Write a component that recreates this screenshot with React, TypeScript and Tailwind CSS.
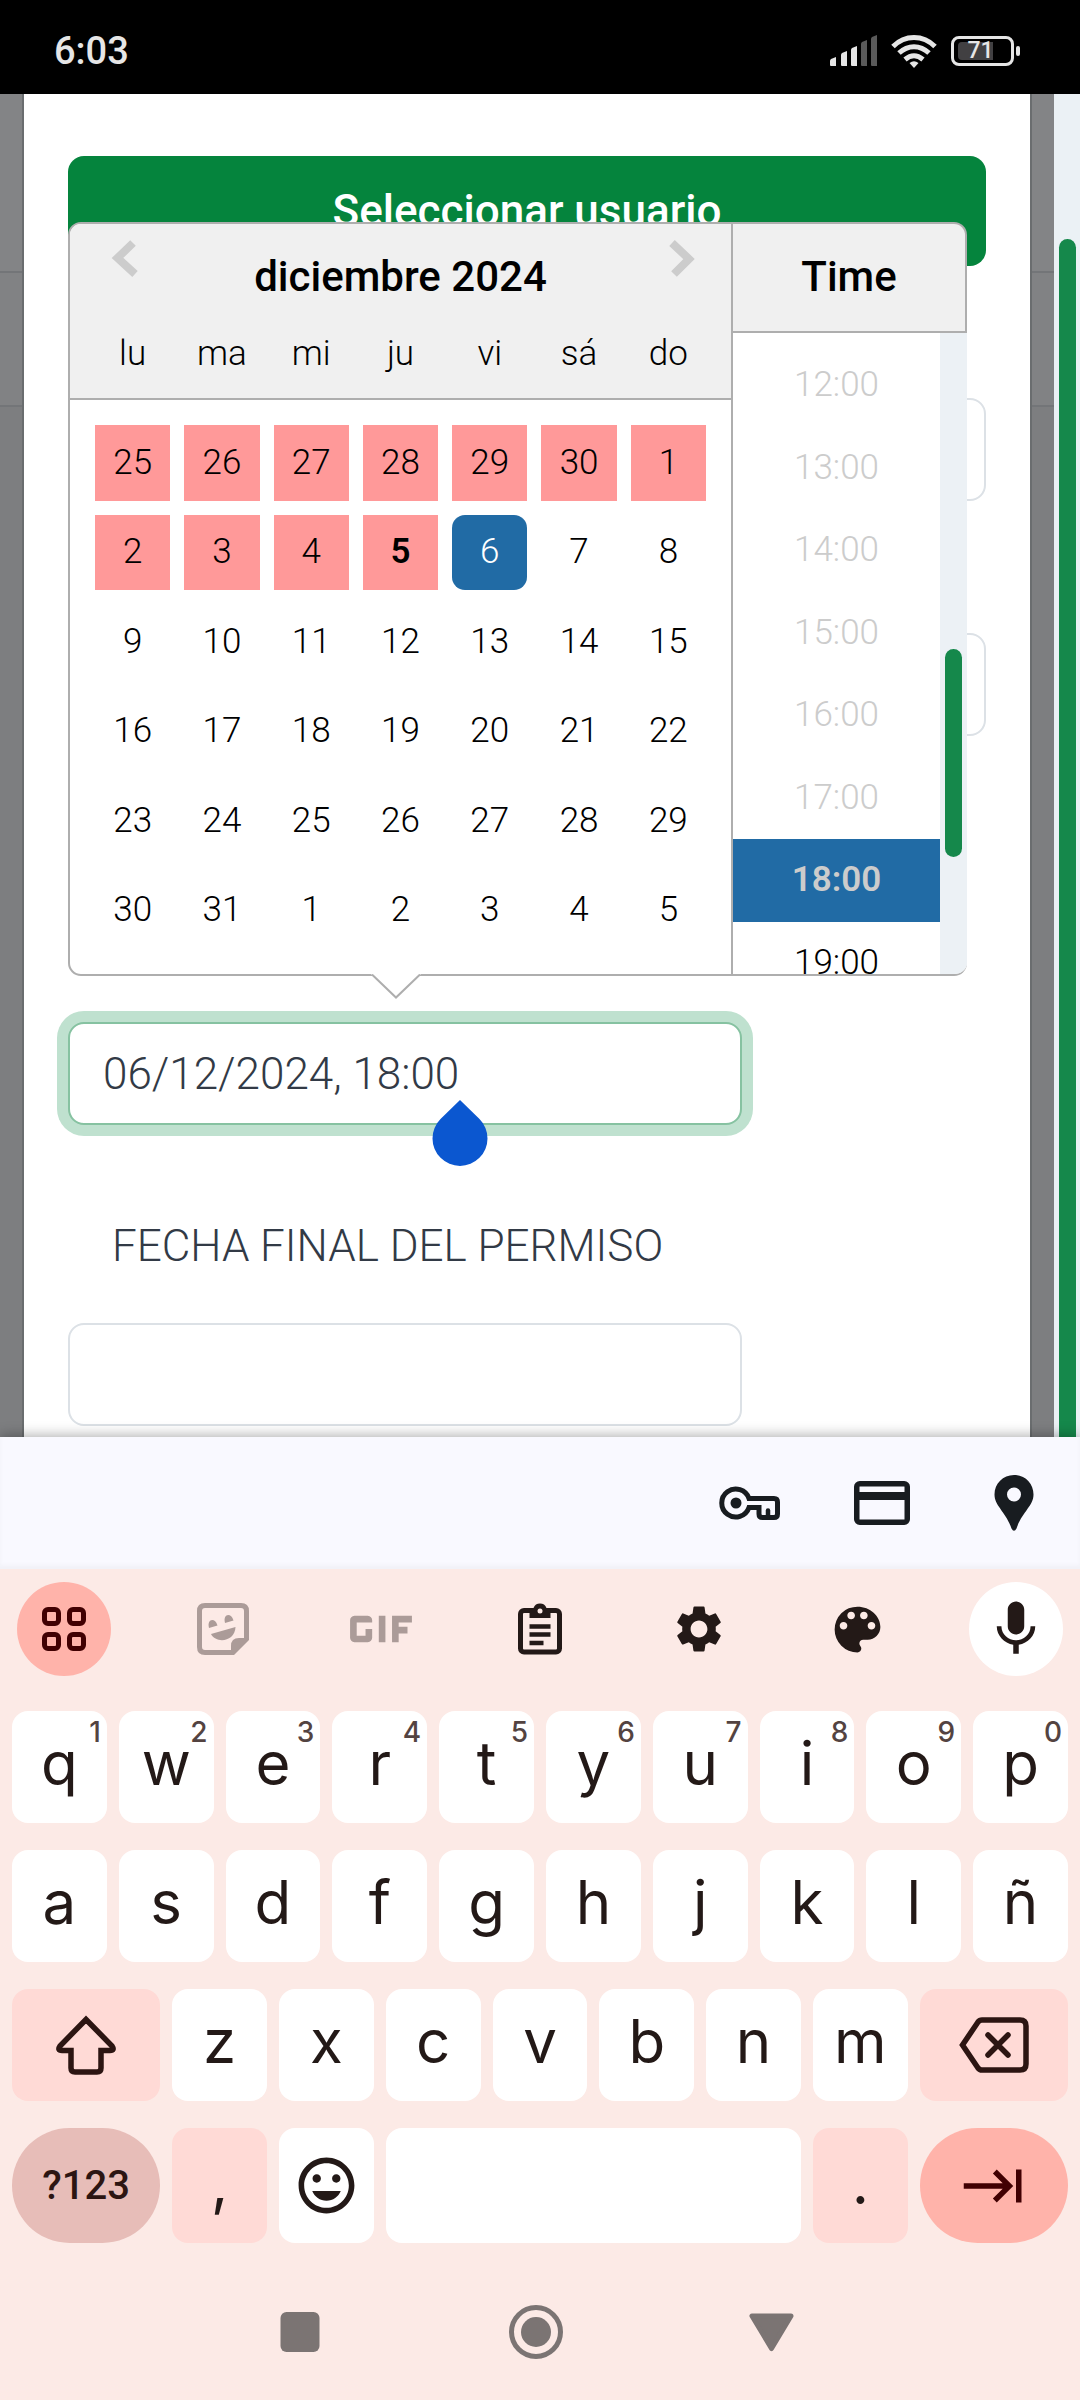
import { useState } from 'react';
import type { ReactNode } from 'react';
import { MdColorLens, MdGif, MdKeyboardTab, MdMic, MdOutlineInsertEmoticon, MdSettings } from 'react-icons/md';

const weekdays = ['lu', 'ma', 'mi', 'ju', 'vi', 'sá', 'do'];
const days = [
  25, 26, 27, 28, 29, 30, 1,
  2, 3, 4, 5, 6, 7, 8,
  9, 10, 11, 12, 13, 14, 15,
  16, 17, 18, 19, 20, 21, 22,
  23, 24, 25, 26, 27, 28, 29,
  30, 31, 1, 2, 3, 4, 5,
];
const times = ['12:00', '13:00', '14:00', '15:00', '16:00', '17:00', '18:00', '19:00'];

const TODAY = 10;

const topRow = 'qwertyuiop'.split('');
const midRow = 'asdfghjklñ'.split('');
const lowRow = 'zxcvbnm'.split('');

function StatusBar() {
  return (
    <header className="flex h-[94px] shrink-0 items-center justify-between bg-black pt-[8px] pr-[60px] pl-[54px]">
      <span className="text-[38px] leading-[44px] font-medium text-[#e6e6e6]">6:03</span>
      <div className="flex items-center gap-[12px]">
        <svg width="50" height="32" viewBox="0 0 50 32">
          <path d="M1 26q0-1 1-2l5-2v9H2q-1 0-1-1z" fill="#e6e6e6" />
          <path d="M12 20q0-1 1-2l5-2v15h-5q-1 0-1-1z" fill="#e6e6e6" />
          <path d="M22 15q0-1 1-2l5-2v20h-5q-1 0-1-1z" fill="#e6e6e6" />
          <path d="M32 9q0-1 1-2l5-2v26h-5q-1 0-1-1z" fill="#5a5a5a" />
          <path d="M42 4q0-1 1-2l5-2v31h-5q-1 0-1-1z" fill="#5a5a5a" />
        </svg>
        <svg width="46" height="34" viewBox="0 0 46 34" fill="none" stroke="#e6e6e6" strokeWidth="5">
          <path d="M2 12.5C14 .5 32 .5 44 12.5" />
          <path d="M8 19C17 10.5 29 10.5 38 19" />
          <path d="M14 25.5C20 20.5 26 20.5 32 25.5" />
          <path d="M23 34l-4.5-5q4.5-3.5 9 0z" fill="#e6e6e6" stroke="none" />
        </svg>
        <div className="ml-[2px] flex items-center gap-[2px]">
          <div className="relative flex h-[30px] w-[63px] items-center rounded-[8px] border-[3px] border-[#e6e6e6] px-[4px]">
            <div className="h-[18px] w-[35px] rounded-l-[4px] bg-[#414042]" />
            <span className="absolute inset-x-0 pr-[4px] text-center text-[23px] leading-[24px] font-medium text-[#e6e6e6]">71</span>
          </div>
          <div className="h-[10px] w-[4px] rounded-[2px] bg-[#e6e6e6]" />
        </div>
      </div>
    </header>
  );
}

function Backdrop() {
  return (
    <div className="flex w-[22px] shrink-0 flex-col bg-[#7d7e80]">
      <div className="h-[179px] border-b-2 border-[#737578] bg-[#838486]" />
      <div className="h-[134px] border-b-2 border-[#737578] bg-[#818284]" />
    </div>
  );
}

function DatePicker() {
  const [selected, setSelected] = useState(11);
  const [time, setTime] = useState('18:00');

  const dayClass = (i: number) => {
    if (i === selected) return 'rounded-[13px] bg-[#216ba5] text-white';
    if (i === TODAY) return 'bg-[#ff9999] font-semibold';
    if (i < TODAY) return 'bg-[#ff9999]';
    return '';
  };

  const timeClass = (t: string) => {
    if (t === time) return 'bg-[#216ba5] font-semibold text-[#cccccc]';
    return t < '18:00' ? 'text-[#cccccc]' : 'text-black';
  };

  return (
    <div className="absolute right-[19px] bottom-[149px] left-0 flex text-[35px] leading-[40px] font-light text-black">
      <div className="flex-1 rounded-l-[13px] border-2 border-[#aeaeae] bg-white">
        <div className="relative rounded-tl-[11px] border-b-2 border-[#aeaeae] bg-[#f0f0f0] px-[25px] pt-[29px] pb-[24px]">
          <button type="button" aria-label="Mes anterior" className="absolute top-[14px] left-[40px]">
            <svg width="30" height="40" viewBox="0 0 30 40" fill="none" stroke="#cccccc" strokeWidth="8">
              <path d="M23 5L7.5 20L25 36" />
            </svg>
          </button>
          <button type="button" aria-label="Mes siguiente" className="absolute top-[14px] right-[34px]">
            <svg width="30" height="40" viewBox="0 0 30 40" fill="none" stroke="#cccccc" strokeWidth="8">
              <path d="M5 5L22 21L7 36" />
            </svg>
          </button>
          <h2 className="text-center text-[42px] leading-[48px] font-medium">diciembre 2024</h2>
          <div className="mt-[33px] grid grid-cols-7 gap-x-[14px] text-center">
            {weekdays.map(name => (
              <span key={name}>{name}</span>
            ))}
          </div>
        </div>
        <div className="mx-[25px] mt-[25px] mb-[26px] grid h-[523px] grid-cols-7 grid-rows-6 gap-[14px]">
          {days.map((day, i) => (
            <button key={i} type="button" onClick={() => setSelected(i)} className={dayClass(i)}>
              {day}
            </button>
          ))}
        </div>
      </div>
      <div className="flex w-[234px] flex-col">
        <div className="rounded-tr-[13px] border-t-2 border-r-2 border-b-2 border-[#aeaeae] bg-[#f0f0f0] pt-[29px] pb-[30px]">
          <h2 className="text-center text-[42px] leading-[48px] font-medium">Time</h2>
        </div>
        <div className="flex h-[643px] overflow-hidden rounded-br-[13px] border-b-2 border-[#aeaeae] bg-white">
          <ul className="flex h-[671px] flex-1 flex-col pt-[11px]">
            {times.map(t => (
              <li key={t} className="flex flex-1">
                <button type="button" onClick={() => setTime(t)} className={`w-full ${timeClass(t)}`}>
                  {t}
                </button>
              </li>
            ))}
          </ul>
          <div className="w-[27px] bg-[#ecf1f5] px-[5px] pt-[316px]">
            <div className="h-[208px] rounded-full bg-[#15884b]" />
          </div>
        </div>
      </div>
      <svg className="absolute top-full left-[303px] -mt-[2px]" width="50" height="25" viewBox="0 0 50 25">
        <path d="M0 0h50L25 23.5z" fill="white" />
        <path d="M1 .5L25 23.5L49 .5" fill="none" stroke="#aeaeae" strokeWidth="2" />
      </svg>
    </div>
  );
}

function PermitForm() {
  const fieldClass = 'h-[103px] w-full rounded-[16px] border-2 border-[#dce1e6] bg-white';

  return (
    <form className="flex-1 border-x-2 border-[#6a6d6f] bg-white px-[44px] pt-[62px]">
      <button type="button" className="h-[110px] w-full rounded-[16px] bg-[#05843d] text-[44px] leading-[60px] font-medium text-white">
        Seleccionar usuario
      </button>
      <input type="text" aria-label="Usuario" className={`mt-[132px] block ${fieldClass}`} />
      <input type="text" aria-label="Permiso" className={`mt-[132px] block ${fieldClass}`} />
      <div className="relative mt-[286px]">
        <input
          type="text"
          aria-label="Fecha inicial"
          defaultValue="06/12/2024, 18:00"
          className="block h-[103px] w-full max-w-[674px] rounded-[16px] border-2 border-[#86c2a1] bg-white px-[33px] text-[44px] leading-[60px] font-light text-[#323a46] ring-[11px] ring-[#bfe1cf] outline-none"
        />
        <DatePicker />
        <svg className="absolute top-[78px] left-[364px]" width="56" height="66" viewBox="0 0 56 66">
          <path d="M28 0L47.5 19A27.5 27.5 0 1 1 8.5 19z" fill="#0b57d0" />
        </svg>
      </div>
      <label htmlFor="fecha-final" className="mt-[91px] block pl-[44px] text-[44px] leading-[60px] font-light text-[#323a46]">
        FECHA FINAL DEL PERMISO
      </label>
      <input id="fecha-final" type="text" className={`mt-[47px] block max-w-[674px] ${fieldClass}`} />
    </form>
  );
}

function AutofillBar() {
  const itemClass = 'flex w-[132px] items-center justify-center';

  return (
    <div className="flex h-[132px] justify-end bg-[#f9f9ff] text-[#181c20] shadow-[inset_0_-4px_4px_rgba(0,0,0,0.03)]">
      <button type="button" aria-label="Contraseñas" className={itemClass}>
        <svg width="62" height="34" viewBox="0 0 62 34">
          <path
            d="M30 12.5H55q3.5 0 3.5 3.5V28q0 3.5-3.5 3.5H43.5q-3.5 0-3.5-3.5V21.5H30A14 14 0 1 1 30 12.5z"
            fill="none"
            stroke="currentColor"
            strokeWidth="5"
          />
          <circle cx="17" cy="17" r="5.5" fill="currentColor" />
          <path d="M49 31V24.5" stroke="currentColor" strokeWidth="4.5" strokeLinecap="round" />
        </svg>
      </button>
      <button type="button" aria-label="Tarjetas" className={itemClass}>
        <svg width="56" height="44" viewBox="0 0 56 44">
          <rect x="2.75" y="2.75" width="50.5" height="38.5" rx="3" fill="none" stroke="currentColor" strokeWidth="5.5" />
          <path d="M3 11h50v8H3z" fill="currentColor" />
        </svg>
      </button>
      <button type="button" aria-label="Direcciones" className={itemClass}>
        <svg width="56" height="56" viewBox="0 0 56 56">
          <path
            d="M28 0C17 0 8.5 8.5 8.5 19.5C8.5 31 20 37 25.5 53.5Q28 58 30.5 53.5C36 37 47.5 31 47.5 19.5C47.5 8.5 39 0 28 0zM28 12.5a7 7 0 1 1 0 14a7 7 0 1 1 0-14z"
            fill="currentColor"
            fillRule="evenodd"
          />
        </svg>
      </button>
    </div>
  );
}

function KeyboardToolbar() {
  const toolClass = 'flex size-[94px] items-center justify-center rounded-full';

  return (
    <div className="flex items-center justify-between px-[17px] pt-[13px] pb-[35px] text-[#231917]">
      <button type="button" aria-label="Menú" className={`${toolClass} bg-[#ffb3aa]`}>
        <svg width="44" height="44" viewBox="0 0 44 44" fill="none" stroke="#410002" strokeWidth="5">
          <rect x="2.5" y="2.5" width="14" height="14" rx="3.5" />
          <rect x="27.5" y="2.5" width="14" height="14" rx="3.5" />
          <rect x="2.5" y="27.5" width="14" height="14" rx="3.5" />
          <rect x="27.5" y="27.5" width="14" height="14" rx="3.5" />
        </svg>
      </button>
      <button type="button" aria-label="Stickers" className={`${toolClass} text-[#ab9b98]`}>
        <svg width="52" height="52" viewBox="0 0 52 52">
          <path
            d="M8 2.5H44Q49.500 2.5 49.5 8V36L36 49.5H8Q2.5 49.5 2.5 44V8Q2.5 2.5 8 2.5z"
            fill="none"
            stroke="currentColor"
            strokeWidth="5"
          />
          <path d="M34 51V43q0-8 8-8h9z" fill="currentColor" />
          <path d="M12 25C9.500 16 18 14 20.500 22.500z" fill="currentColor" />
          <path d="M28 20C25.500 11 34 9 36.500 17.500z" fill="currentColor" />
          <path d="M14 31L38.5 24C38 39 19 41 14 31z" fill="currentColor" />
        </svg>
      </button>
      <button type="button" aria-label="GIF" className={`${toolClass} text-[#ab9b98]`}>
        <MdGif size={106} className="shrink-0" />
      </button>
      <button type="button" aria-label="Portapapeles" className={toolClass}>
        <svg width="44" height="52" viewBox="0 0 44 52">
          <rect x="2.5" y="7.5" width="39" height="41.5" rx="3.5" fill="none" stroke="currentColor" strokeWidth="5" />
          <path d="M11.500 15V5h4a7 7 0 0 1 13 0h4v10z" fill="currentColor" />
          <circle cx="22" cy="8" r="2.5" fill="#fceae6" />
          <path d="M11.5 23.5h21M11.500 31.5h21M11.500 40h14" stroke="currentColor" strokeWidth="4.5" />
        </svg>
      </button>
      <button type="button" aria-label="Ajustes" className={toolClass}>
        <MdSettings size={56} />
      </button>
      <button type="button" aria-label="Temas" className={toolClass}>
        <MdColorLens size={61} />
      </button>
      <button type="button" aria-label="Dictado" className={`${toolClass} bg-white`}>
        <MdMic size={66} />
      </button>
    </div>
  );
}

interface KeyProps {
  children?: ReactNode;
  hint?: string;
  label?: string;
  className?: string;
}

function Key({ children, hint, label, className = 'col-span-2 rounded-[16px] bg-white pb-[8px]' }: KeyProps) {
  return (
    <button type="button" aria-label={label} className={`relative flex items-center justify-center ${className}`}>
      {children}
      {hint && (
        <span className="absolute top-[5px] right-[6px] text-[28px] leading-[32px] font-medium text-[#534341]">{hint}</span>
      )}
    </button>
  );
}

function Keyboard() {
  const rowClass = 'grid h-[112px] grid-cols-20 gap-x-[12px]';

  return (
    <div className="flex flex-col gap-[27px] px-[12px] font-[Inter,sans-serif] text-[60px] leading-[72px] text-[#231917]">
      <div className={rowClass}>
        {topRow.map((letter, i) => (
          <Key key={letter} hint={String((i + 1) % 10)}>{letter}</Key>
        ))}
      </div>
      <div className={rowClass}>
        {midRow.map(letter => (
          <Key key={letter}>{letter}</Key>
        ))}
      </div>
      <div className={rowClass}>
        <Key label="Mayúsculas" className="col-span-3 rounded-[16px] bg-[#ffdad6]">
          <svg width="62" height="60" viewBox="0 0 62 60" fill="none" stroke="#2c1512" strokeWidth="5.5">
            <path d="M31 4.5L57 31Q60 35.5 55 35.5H46V53Q46 57 42 57H20Q16 57 16 53V35.5H7Q2 35.5 5 31z" />
          </svg>
        </Key>
        {lowRow.map(letter => (
          <Key key={letter}>{letter}</Key>
        ))}
        <Key label="Borrar" className="col-span-3 rounded-[16px] bg-[#ffdad6]">
          <svg width="70" height="56" viewBox="0 0 70 56" fill="none" stroke="#2c1512" strokeWidth="5.5">
            <path d="M23 3H61Q67 3 67 9V47Q67 53 61 53H23Q20.5 53 19 51L3.5 28L19 5Q20.5 3 23 3z" />
            <path d="M29 18L49 38M49 18L29 38" strokeLinecap="round" />
          </svg>
        </Key>
      </div>
      <div className="grid h-[115px] grid-cols-20 gap-x-[12px]">
        <Key className="col-span-3 rounded-full bg-[#e7bdb8] font-[Roboto,sans-serif] text-[40px] font-medium text-[#2c1512]">
          ?123
        </Key>
        <Key className="col-span-2 rounded-[16px] bg-[#ffdad6] pb-[8px]">,</Key>
        <Key label="Emojis" className="col-span-2 rounded-[16px] bg-white">
          <MdOutlineInsertEmoticon size={67} />
        </Key>
        <Key label="Espacio" className="col-span-8 rounded-[16px] bg-white" />
        <Key className="col-span-2 rounded-[16px] bg-[#ffdad6] pb-[8px]">.</Key>
        <Key label="Siguiente" className="col-span-3 rounded-full bg-[#ffb3aa] text-[#410002]">
          <MdKeyboardTab size={66} />
        </Key>
      </div>
    </div>
  );
}

function NavigationBar() {
  return (
    <nav className="flex items-center justify-center gap-[182px] pt-[62px] pr-[8px] pb-[41px] text-[#7b7473]">
      <button type="button" aria-label="Recientes">
        <svg width="54" height="54" viewBox="0 0 54 54">
          <rect x="7.5" y="7" width="39" height="40" rx="6" fill="currentColor" />
        </svg>
      </button>
      <button type="button" aria-label="Inicio">
        <svg width="54" height="54" viewBox="0 0 54 54">
          <circle cx="27" cy="27" r="24.5" fill="none" stroke="currentColor" strokeWidth="5" />
          <circle cx="27" cy="27" r="15" fill="currentColor" />
        </svg>
      </button>
      <button type="button" aria-label="Atrás">
        <svg width="54" height="54" viewBox="0 0 54 54">
          <path d="M7 11H46L26.500 43.5z" fill="currentColor" stroke="currentColor" strokeWidth="5" strokeLinejoin="round" />
        </svg>
      </button>
    </nav>
  );
}

export default function App() {
  return (
    <div className="flex h-screen flex-col overflow-hidden bg-[#fceae6] font-[Roboto,sans-serif]">
      <StatusBar />
      <main className="flex min-h-0 flex-1 overflow-hidden">
        <Backdrop />
        <PermitForm />
        <Backdrop />
        <div className="w-[26px] bg-[#ebf1f5] pt-[145px] pr-[4px] pl-[5px]">
          <div className="h-full rounded-t-full bg-[#15884b]" />
        </div>
      </main>
      <section className="relative z-10 shrink-0 bg-[#fceae6] shadow-[0_-2px_12px_rgba(0,0,0,0.3)]">
        <AutofillBar />
        <KeyboardToolbar />
        <Keyboard />
        <NavigationBar />
      </section>
    </div>
  );
}
